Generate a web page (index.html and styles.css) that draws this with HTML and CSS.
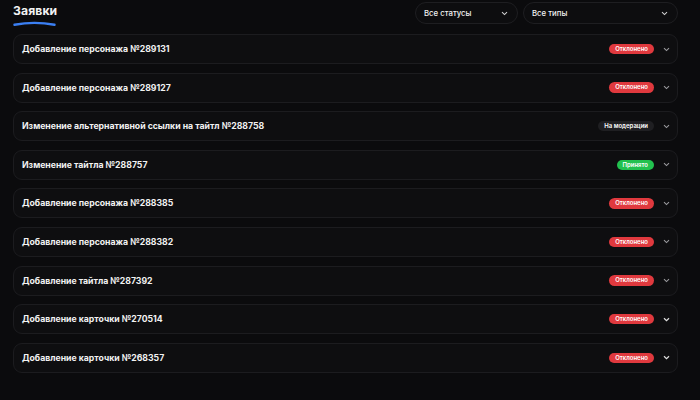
FILE: index.html
```html
<!DOCTYPE html>
<html lang="ru">
<head>
    <meta charset="UTF-8">
    <meta name="viewport" content="width=device-width, initial-scale=1.0">
    <title>Заявки</title>
    <link rel="stylesheet" href="styles.css">
</head>
<body>
    <div class="page">
        <div class="header">
            <div class="title">
                <h1>Заявки</h1>
                <svg class="underline" width="43" height="5" viewBox="0 0 43 5">
                    <path d="M1.5 3.8 Q21.5 0 41.5 3.8" fill="none" stroke="#3b7ff2" stroke-width="2.4" stroke-linecap="round"/>
                </svg>
            </div>
            <div class="filters">
                <div class="select status">
                    <span>Все статусы</span>
                    <svg class="chev" width="7" height="5" viewBox="0 0 7 5"><path d="M1 1.2 L3.5 3.6 L6 1.2" fill="none" stroke="#d0d0d0" stroke-width="1.1"/></svg>
                </div>
                <div class="select types">
                    <span>Все типы</span>
                    <svg class="chev" width="7" height="5" viewBox="0 0 7 5"><path d="M1 1.2 L3.5 3.6 L6 1.2" fill="none" stroke="#d0d0d0" stroke-width="1.1"/></svg>
                </div>
            </div>
        </div>

        <div class="list">
            <div class="item">
                <span class="name">Добавление персонажа №289131</span>
                <span class="badge rejected">Отклонено</span>
                <svg class="chev" width="7" height="5" viewBox="0 0 7 5"><path d="M1 1.2 L3.5 3.6 L6 1.2" fill="none" stroke="#9a9a9e" stroke-width="1.1"/></svg>
            </div>
            <div class="item">
                <span class="name">Добавление персонажа №289127</span>
                <span class="badge rejected">Отклонено</span>
                <svg class="chev" width="7" height="5" viewBox="0 0 7 5"><path d="M1 1.2 L3.5 3.6 L6 1.2" fill="none" stroke="#9a9a9e" stroke-width="1.1"/></svg>
            </div>
            <div class="item">
                <span class="name">Изменение альтернативной ссылки на тайтл №288758</span>
                <span class="badge pending">На модерации</span>
                <svg class="chev" width="7" height="5" viewBox="0 0 7 5"><path d="M1 1.2 L3.5 3.6 L6 1.2" fill="none" stroke="#9a9a9e" stroke-width="1.1"/></svg>
            </div>
            <div class="item">
                <span class="name">Изменение тайтла №288757</span>
                <span class="badge accepted">Принято</span>
                <svg class="chev" width="7" height="5" viewBox="0 0 7 5"><path d="M1 1.2 L3.5 3.6 L6 1.2" fill="none" stroke="#9a9a9e" stroke-width="1.1"/></svg>
            </div>
            <div class="item">
                <span class="name">Добавление персонажа №288385</span>
                <span class="badge rejected">Отклонено</span>
                <svg class="chev" width="7" height="5" viewBox="0 0 7 5"><path d="M1 1.2 L3.5 3.6 L6 1.2" fill="none" stroke="#9a9a9e" stroke-width="1.1"/></svg>
            </div>
            <div class="item">
                <span class="name">Добавление персонажа №288382</span>
                <span class="badge rejected">Отклонено</span>
                <svg class="chev" width="7" height="5" viewBox="0 0 7 5"><path d="M1 1.2 L3.5 3.6 L6 1.2" fill="none" stroke="#9a9a9e" stroke-width="1.1"/></svg>
            </div>
            <div class="item">
                <span class="name">Добавление тайтла №287392</span>
                <span class="badge rejected">Отклонено</span>
                <svg class="chev" width="7" height="5" viewBox="0 0 7 5"><path d="M1 1.2 L3.5 3.6 L6 1.2" fill="none" stroke="#9a9a9e" stroke-width="1.1"/></svg>
            </div>
            <div class="item">
                <span class="name">Добавление карточки №270514</span>
                <span class="badge rejected">Отклонено</span>
                <svg class="chev" width="7" height="5" viewBox="0 0 7 5"><path d="M1 1.2 L3.5 3.6 L6 1.2" fill="none" stroke="#e0e0e0" stroke-width="1.2"/></svg>
            </div>
            <div class="item">
                <span class="name">Добавление карточки №268357</span>
                <span class="badge rejected">Отклонено</span>
                <svg class="chev" width="7" height="5" viewBox="0 0 7 5"><path d="M1 1.2 L3.5 3.6 L6 1.2" fill="none" stroke="#e0e0e0" stroke-width="1.2"/></svg>
            </div>
        </div>
    </div>
</body>
</html>
```

FILE: styles.css
```css
body {
    margin: 0;
    padding: 0;
    background: #0b0b0d;
    color: #f2f2f2;
    font-family: Inter, "Noto Sans", sans-serif;
}

.page {
    padding: 0 22px 0 13px;
}

.header {
    display: flex;
    justify-content: space-between;
    align-items: flex-start;
    height: 34px;
}

.title {
    display: flex;
    flex-direction: column;
    padding-top: 3px;
}

.title h1 {
    margin: 0;
    font-size: 12.2px;
    font-weight: 700;
    line-height: 15px;
    letter-spacing: 0.1px;
}

.underline {
    display: block;
    margin-top: 3px;
}

.filters {
    display: flex;
    gap: 5px;
    padding-top: 2px;
}

.select {
    display: flex;
    align-items: center;
    justify-content: space-between;
    height: 20px;
    padding: 0 9px 0 8px;
    border: 1px solid #1e1e21;
    border-radius: 11px;
    background: #0d0d0f;
    font-size: 7.8px;
    font-weight: 500;
}

.select.status {
    width: 84px;
}

.select.types {
    width: 136px;
}

.list {
    display: flex;
    flex-direction: column;
    gap: 8.6px;
}

.item {
    display: flex;
    align-items: center;
    height: 28px;
    padding: 0 7px 0 8px;
    border: 1px solid #1c1c1f;
    border-radius: 9px;
    background: #0e0e10;
}

.name {
    flex: 1;
    font-size: 8.7px;
    font-weight: 700;
}

.badge {
    font-size: 6px;
    font-weight: 600;
    line-height: 10.5px;
    padding: 0 6px;
    border-radius: 6px;
    color: #fff;
    margin-right: 9px;
}

.badge.rejected {
    background: #e0393e;
}

.badge.accepted {
    background: #22c14f;
}

.badge.pending {
    background: #1f1f22;
}

.chev {
    display: block;
}
```
